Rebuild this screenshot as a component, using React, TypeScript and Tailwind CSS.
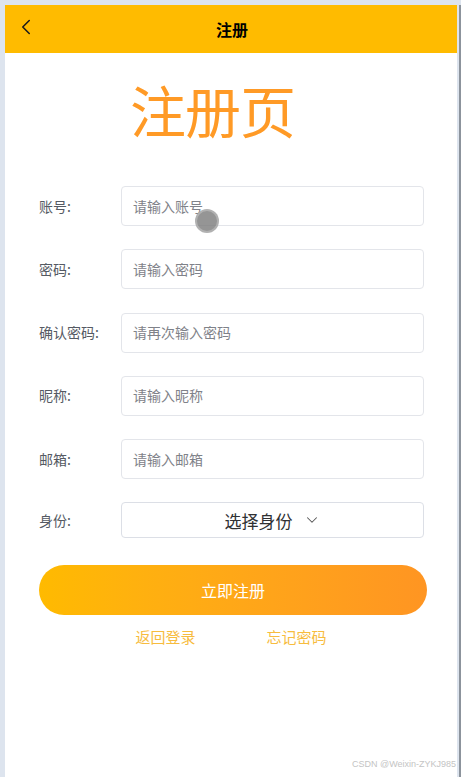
import { ChevronDown, ChevronLeft } from 'lucide-react';

const fields = [
  { label: '账号:', placeholder: '请输入账号' },
  { label: '密码:', placeholder: '请输入密码' },
  { label: '确认密码:', placeholder: '请再次输入密码' },
  { label: '昵称:', placeholder: '请输入昵称' },
  { label: '邮箱:', placeholder: '请输入邮箱' },
];

export default function App() {
  return (
    <div
      className="w-[461px] h-[777px] bg-[#dde4ee] pt-[5px] pl-[5px] flex overflow-hidden relative"
      style={{ fontFamily: '"Microsoft YaHei", "Noto Sans CJK SC", "Noto Sans", sans-serif' }}
    >
      <div className="w-[452px] h-full bg-white flex flex-col">
        {/* header */}
        <div className="h-[48px] bg-[#ffbb00] relative flex items-center justify-center shrink-0">
          <ChevronLeft className="absolute left-[8px] top-[9px] w-[26px] h-[26px] text-[#1a1a1a]" strokeWidth={1.4} />
          <h1 className="text-[16px] font-bold text-black ml-[2px]">注册</h1>
        </div>

        <div className="mt-[24px] ml-[125px] text-[56px] leading-[64px] text-[#ff9a26] tracking-[-1px]">注册页</div>

        <div className="mt-[45px] flex flex-col gap-[23.3px] pl-[34px] pr-[33px]">
          {fields.map((f) => (
            <div key={f.label} className="flex items-center">
              <span className="w-[82px] text-[14px] text-[#555a63]">{f.label}</span>
              <div className="flex-1 h-[40px] border border-[#e3e5ea] rounded-[4px] flex items-center px-[11px]">
                <span className="text-[14px] text-[#7f8289]">{f.placeholder}</span>
              </div>
            </div>
          ))}
          <div className="flex items-center">
            <span className="w-[82px] text-[14px] text-[#555a63]">身份:</span>
            <div className="flex-1 h-[36px] border border-[#dcdfe6] rounded-[4px] flex items-center justify-center gap-[10px]">
              <span className="text-[17px] text-[#303133]">选择身份</span>
              <ChevronDown className="w-[18px] h-[18px] text-[#555]" strokeWidth={1.4} />
            </div>
          </div>
        </div>

        <div className="mt-[27px] ml-[34px] mr-[30px] h-[50px] rounded-full bg-gradient-to-r from-[#ffba00] to-[#ff9522] flex items-center justify-center">
          <span className="text-[16px] text-white">立即注册</span>
        </div>

        <div className="mt-[11px] flex justify-center gap-[71px]">
          <span className="text-[15px] text-[#f7bc3e]">返回登录</span>
          <span className="text-[15px] text-[#f7bc3e]">忘记密码</span>
        </div>

        <div className="mt-auto mb-[6px] pr-[1px] text-right text-[9px] text-[#c4c4c4]" style={{ fontFamily: '"Liberation Sans", Arial, sans-serif' }}>
          CSDN @Weixin-ZYKJ985
        </div>
      </div>
      <div className="w-[2px] h-full bg-[#dde4ee]" />
      <div className="w-[2px] h-full bg-[#8c939c]" />

      {/* touch cursor */}
      <div className="absolute left-[195px] top-[209px] w-[24px] h-[24px] rounded-full bg-[#7a7a7a]/80 border-2 border-[#bdbdbd]/70" />
    </div>
  );
}
